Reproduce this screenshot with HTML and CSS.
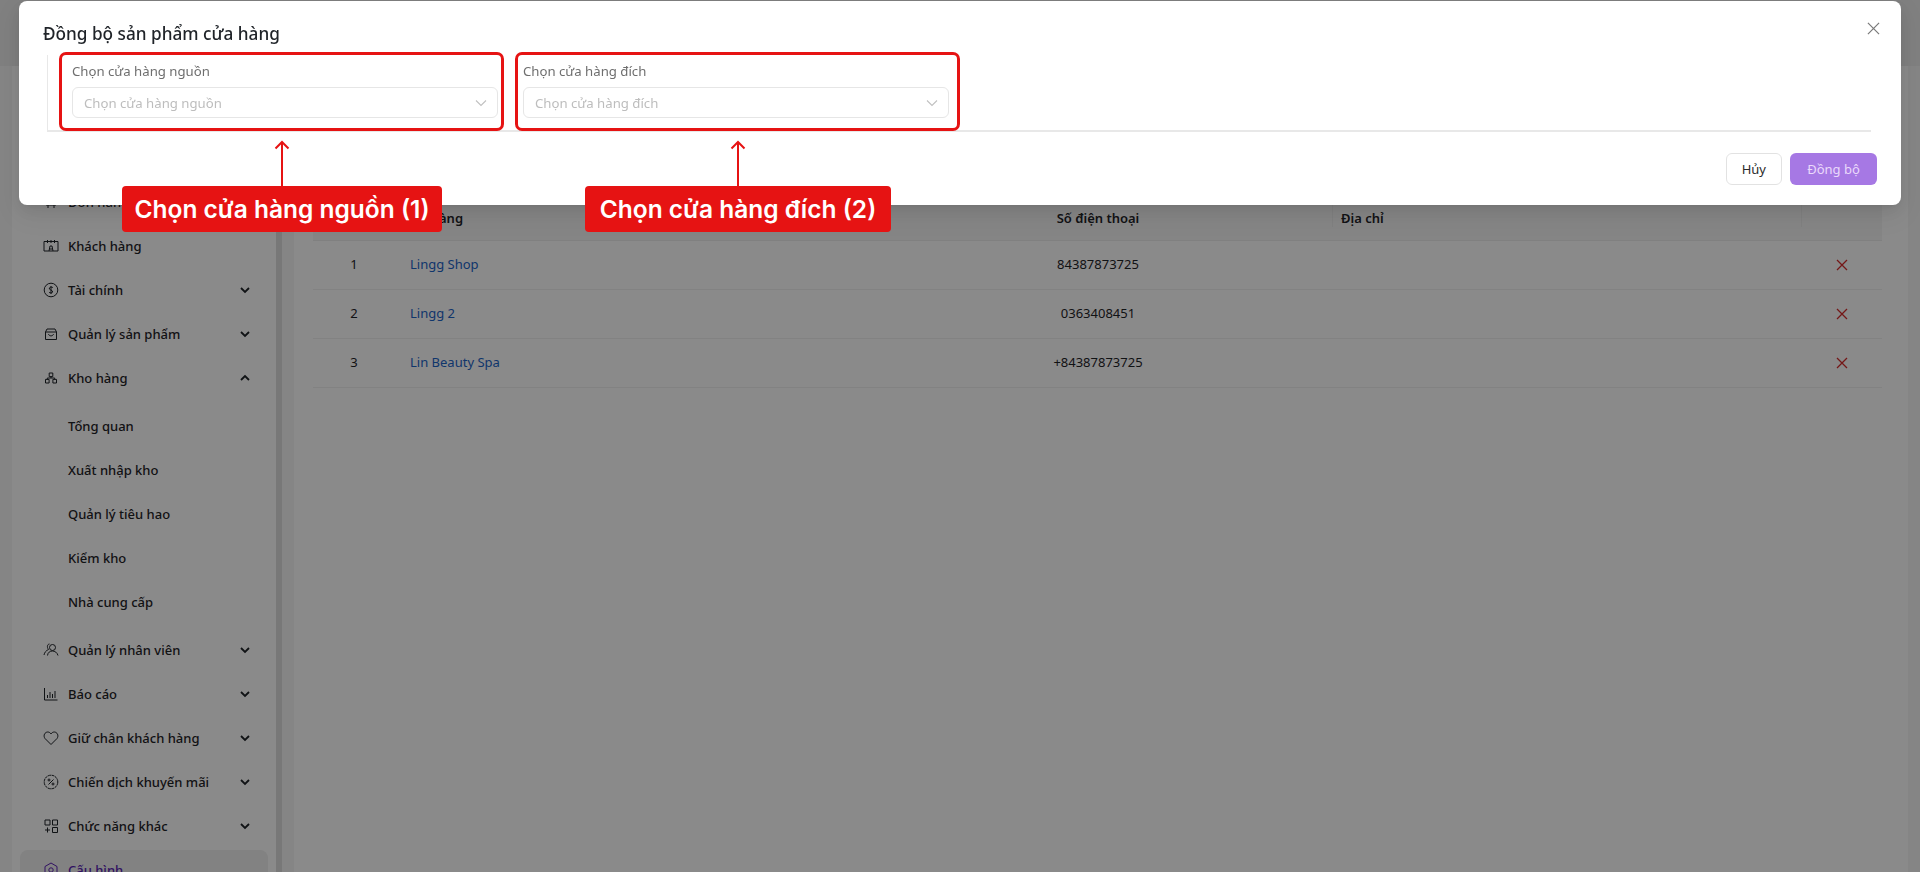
FILE: index.html
```html
<!DOCTYPE html>
<html lang="vi">
<head>
    <meta charset="UTF-8">
    <title>Đồng bộ sản phẩm cửa hàng</title>
    <link rel="stylesheet" href="styles.css">
</head>
<body>
    <div class="page">
        <header class="topbar"></header>
        <div class="layout">
            <aside class="sidebar">
                <nav class="menu">
                    <a class="menu-item"><span class="menu-icon"></span><span class="menu-label">Tổng quan</span></a>
                    <a class="menu-item"><span class="menu-icon"></span><span class="menu-label">Lịch hẹn</span></a>
                    <a class="menu-item">
                        <svg class="menu-icon" viewBox="0 0 16 16"><path d="M3 3h10l-1 5H4zM5 11v3M11 11v3M3 11h10"/></svg>
                        <span class="menu-label">Đơn hàng</span>
                    </a>
                    <a class="menu-item">
                        <svg class="menu-icon" viewBox="0 0 16 16"><path d="M1 3.500h14v9.500H1zM4.500 2v3M8 2v3M11.500 2v3M6 13l1-5h2l1 5M6.500 11h3"/></svg>
                        <span class="menu-label">Khách hàng</span>
                    </a>
                    <a class="menu-item">
                        <svg class="menu-icon" viewBox="0 0 16 16"><circle cx="8" cy="8" r="6.800"/><path d="M10 5.800C9.500 5 7 4.700 6.300 6c-.8 2 3.700 2 3.400 4-.4 1.300-3 1.100-3.700.2M8 4v8"/></svg>
                        <span class="menu-label">Tài chính</span>
                        <svg class="menu-caret" viewBox="0 0 12 12"><path d="M2 4l4 4 4-4"/></svg>
                    </a>
                    <a class="menu-item">
                        <svg class="menu-icon" viewBox="0 0 16 16"><path d="M4 3h8l1.500 3v7.500h-11V6zM2.500 6h11M5.500 8c.5 2.500 4.500 2.500 5 0"/></svg>
                        <span class="menu-label">Quản lý sản phẩm</span>
                        <svg class="menu-caret" viewBox="0 0 12 12"><path d="M2 4l4 4 4-4"/></svg>
                    </a>
                    <a class="menu-item">
                        <svg class="menu-icon" viewBox="0 0 16 16"><path d="M6.200 3h3.600v3.600H6.200zM2.500 9.400h3.600V13H2.500zM9.900 9.400h3.600V13H9.900zM8 6.600v1.400M4.300 9.400V8h7.400v1.400"/></svg>
                        <span class="menu-label">Kho hàng</span>
                        <svg class="menu-caret" viewBox="0 0 12 12"><path d="M2 8l4-4 4 4"/></svg>
                    </a>
                    <div class="submenu">
                        <a class="menu-item sub">Tổng quan</a>
                        <a class="menu-item sub">Xuất nhập kho</a>
                        <a class="menu-item sub">Quản lý tiêu hao</a>
                        <a class="menu-item sub">Kiểm kho</a>
                        <a class="menu-item sub">Nhà cung cấp</a>
                    </div>
                    <a class="menu-item">
                        <svg class="menu-icon" viewBox="0 0 16 16"><circle cx="9.500" cy="5.500" r="3"/><path d="M4.500 13.500c.5-6 9-6 10.500 0M6.500 2C4.500 2 3.500 5 5.500 7.500 3 8.500 1.500 10.500 1 13"/></svg>
                        <span class="menu-label">Quản lý nhân viên</span>
                        <svg class="menu-caret" viewBox="0 0 12 12"><path d="M2 4l4 4 4-4"/></svg>
                    </a>
                    <a class="menu-item">
                        <svg class="menu-icon" viewBox="0 0 16 16"><path d="M1.500 2v12h13M4.500 12V9M7 12V6M9.500 12V8M12 12V5"/></svg>
                        <span class="menu-label">Báo cáo</span>
                        <svg class="menu-caret" viewBox="0 0 12 12"><path d="M2 4l4 4 4-4"/></svg>
                    </a>
                    <a class="menu-item">
                        <svg class="menu-icon" viewBox="0 0 16 16"><path d="M8 14.500L2 8.500C-.2 5.500 2 2 4.700 2 6.200 2 7.300 2.800 8 4 8.700 2.800 9.800 2 11.300 2 14 2 16.200 5.500 14 8.500z"/></svg>
                        <span class="menu-label">Giữ chân khách hàng</span>
                        <svg class="menu-caret" viewBox="0 0 12 12"><path d="M2 4l4 4 4-4"/></svg>
                    </a>
                    <a class="menu-item">
                        <svg class="menu-icon" viewBox="0 0 16 16"><circle cx="8" cy="8" r="6.800" stroke-dasharray="3 .6"/><path d="M5.500 10.500l5-5"/><circle cx="6" cy="6" r="1"/><circle cx="10" cy="10" r="1"/></svg>
                        <span class="menu-label">Chiến dịch khuyến mãi</span>
                        <svg class="menu-caret" viewBox="0 0 12 12"><path d="M2 4l4 4 4-4"/></svg>
                    </a>
                    <a class="menu-item">
                        <svg class="menu-icon" viewBox="0 0 16 16"><path d="M2 2h5v5H2zM9.500 2h5v5h-5zM9.500 9.500h5v5h-5zM4.500 9.500v5M2 12h5"/></svg>
                        <span class="menu-label">Chức năng khác</span>
                        <svg class="menu-caret" viewBox="0 0 12 12"><path d="M2 4l4 4 4-4"/></svg>
                    </a>
                    <a class="menu-item active">
                        <svg class="menu-icon" viewBox="0 0 16 16"><path d="M8 1l6 3.500v7L8 15l-6-3.500v-7z"/><circle cx="8" cy="8" r="2.200"/></svg>
                        <span class="menu-label">Cấu hình</span>
                    </a>
                </nav>
            </aside>
            <div class="gutter"></div>
            <main class="content">
                <div class="content-head"></div>
                <table class="store-table">
                    <thead>
                        <tr>
                            <th class="col-no">STT</th>
                            <th class="col-name">Tên cửa hàng</th>
                            <th class="col-phone">Số điện thoại</th>
                            <th class="col-address">Địa chỉ</th>
                            <th class="col-action"></th>
                        </tr>
                    </thead>
                    <tbody>
                        <tr>
                            <td class="col-no">1</td>
                            <td class="col-name"><a>Lingg Shop</a></td>
                            <td class="col-phone">84387873725</td>
                            <td></td>
                            <td class="col-action"><svg class="remove" viewBox="0 0 12 12"><path d="M1 1l10 10M11 1L1 11"/></svg></td>
                        </tr>
                        <tr>
                            <td class="col-no">2</td>
                            <td class="col-name"><a>Lingg 2</a></td>
                            <td class="col-phone">0363408451</td>
                            <td></td>
                            <td class="col-action"><svg class="remove" viewBox="0 0 12 12"><path d="M1 1l10 10M11 1L1 11"/></svg></td>
                        </tr>
                        <tr>
                            <td class="col-no">3</td>
                            <td class="col-name"><a>Lin Beauty Spa</a></td>
                            <td class="col-phone">+84387873725</td>
                            <td></td>
                            <td class="col-action"><svg class="remove" viewBox="0 0 12 12"><path d="M1 1l10 10M11 1L1 11"/></svg></td>
                        </tr>
                    </tbody>
                </table>
            </main>
        </div>
    </div>

    <div class="mask"></div>

    <section class="modal">
        <h2 class="modal-title">Đồng bộ sản phẩm cửa hàng</h2>
        <svg class="modal-close" viewBox="0 0 14 14"><path d="M1 1l12 12M13 1L1 13"/></svg>
        <div class="sync-form">
            <div class="field">
                <label class="field-label">Chọn cửa hàng nguồn</label>
                <div class="select">
                    <span>Chọn cửa hàng nguồn</span>
                    <svg class="select-arrow" viewBox="0 0 12 12"><path d="M1 3.500l5 5 5-5"/></svg>
                </div>
            </div>
            <div class="field">
                <label class="field-label">Chọn cửa hàng đích</label>
                <div class="select">
                    <span>Chọn cửa hàng đích</span>
                    <svg class="select-arrow" viewBox="0 0 12 12"><path d="M1 3.500l5 5 5-5"/></svg>
                </div>
            </div>
        </div>
        <div class="modal-footer">
            <button class="btn">Hủy</button>
            <button class="btn btn-primary">Đồng bộ</button>
        </div>
    </section>

    <div class="note-box note-box-source"></div>
    <div class="note-box note-box-target"></div>

    <div class="note note-source">
        <svg class="note-arrow" viewBox="0 0 16 46"><path d="M8 46V2M1.500 8.500L8 2l6.500 6.500"/></svg>
        <div class="note-text">Chọn cửa hàng nguồn (1)</div>
    </div>
    <div class="note note-target">
        <svg class="note-arrow" viewBox="0 0 16 46"><path d="M8 46V2M1.500 8.500L8 2l6.500 6.500"/></svg>
        <div class="note-text">Chọn cửa hàng đích (2)</div>
    </div>
</body>
</html>
```

FILE: styles.css
```css
* {
    box-sizing: border-box;
}
html, body {
    margin: 0;
    height: 100%;
    overflow: hidden;
}
body {
    font-family: "Noto Sans", "Open Sans", sans-serif;
    font-size: 13px;
    color: #1f2328;
    background-color: #f5f5f5;
}
.page {
    height: 872px;
    display: flex;
    flex-direction: column;
}
.topbar {
    height: 66px;
    background-color: #ececec;
    flex-shrink: 0;
}
.layout {
    display: flex;
    flex: 1;
    min-height: 0;
    padding-left: 12px;
}

/* sidebar */
.sidebar {
    width: 264px;
    background-color: #ffffff;
    padding-top: 26px;
    flex-shrink: 0;
}
.menu {
    display: flex;
    flex-direction: column;
}
.submenu {
    display: flex;
    flex-direction: column;
    padding: 4px 0;
}
.menu-item {
    display: flex;
    align-items: center;
    height: 40px;
    margin: 2px 8px;
    padding: 0 17px 0 23px;
    border-radius: 8px;
    font-weight: 500;
    white-space: nowrap;
}
.menu-item.sub {
    padding-left: 48px;
}
.menu-item.active {
    background-color: #f0f0f0;
    color: #5b1fb5;
}
.menu-icon {
    width: 16px;
    height: 16px;
    margin-right: 9px;
    flex-shrink: 0;
    fill: none;
    stroke: currentColor;
    stroke-width: 1;
}
.menu-label {
    flex: 1;
}
.menu-caret {
    width: 12px;
    height: 12px;
    fill: none;
    stroke: currentColor;
    stroke-width: 1.800;
}
.gutter {
    width: 6px;
    background-color: #dedede;
    flex-shrink: 0;
}

/* store table */
.content {
    flex: 1;
    margin-left: 12px;
    margin-right: 12px;
    background-color: #ffffff;
    padding: 0 26px 0 19px;
}
.content-head {
    height: 139px;
}
.store-table {
    width: 1569px;
    border-collapse: collapse;
    table-layout: fixed;
}
.store-table th {
    height: 35px;
    padding: 0 8px 8px;
    background-color: #f6f6f6;
    font-weight: 600;
    text-align: left;
    border-bottom: 1px solid #ececec;
}
.store-table th.col-phone,
.store-table th.col-address {
    background-image: linear-gradient(#ececec, #ececec);
    background-size: 1px 22px;
    background-position: right top;
    background-repeat: no-repeat;
}
.store-table td {
    height: 49px;
    padding: 0 8px 2px;
    border-bottom: 1px solid #f0f0f0;
}
.col-no {
    width: 80px;
}
.store-table .col-no {
    text-align: center;
    padding-left: 10px;
}
.col-name {
    width: 470px;
}
.store-table .col-name {
    padding-left: 17px;
}
.store-table th.col-name {
    padding-left: 0;
    text-indent: -15px;
}
.col-name a {
    color: #1c64c8;
}
.col-phone {
    width: 470px;
}
.store-table .col-phone {
    text-align: center;
}
.col-address {
    width: 469px;
}
.col-action {
    width: 80px;
}
.store-table .col-action {
    text-align: center;
}
.remove {
    width: 12px;
    height: 12px;
    fill: none;
    stroke: #d62c2c;
    stroke-width: 1.300;
    vertical-align: middle;
}

/* modal layer */
.mask {
    position: fixed;
    inset: 0;
    background-color: rgba(0, 0, 0, 0.46);
}
.modal {
    position: fixed;
    top: 1px;
    left: 19px;
    width: 1882px;
    height: 204px;
    background-color: #ffffff;
    border-radius: 8px;
    padding: 21px 24px 0 24px;
    box-shadow: 0 6px 16px rgba(0, 0, 0, 0.08), 0 3px 6px -4px rgba(0, 0, 0, 0.12), 0 9px 28px 8px rgba(0, 0, 0, 0.05);
}
.modal-title {
    margin: 0;
    font-size: 17.200px;
    line-height: 24px;
    font-weight: 500;
    color: #1f2328;
}
.modal-close {
    position: absolute;
    top: 21px;
    right: 21px;
    width: 13px;
    height: 13px;
    fill: none;
    stroke: #7a7a7a;
    stroke-width: 1.300;
}
.sync-form {
    display: flex;
    gap: 25px;
    height: 77px;
    margin: 9px 6px 0 4px;
    padding: 6px 0 0 24px;
    border-left: 1px solid #e8e8e8;
    border-bottom: 2px solid #e8e8e8;
}
.field {
    width: 426px;
}
.field-label {
    display: block;
    height: 26px;
    line-height: 20px;
    font-size: 13.200px;
    color: #6e6e6e;
}
.select {
    display: flex;
    align-items: center;
    justify-content: space-between;
    height: 31px;
    padding: 0 10px 0 11px;
    border: 1.500px solid #e6e6e6;
    border-radius: 6px;
    font-size: 13.200px;
    color: #bdbdbd;
}
.select-arrow {
    width: 12px;
    height: 12px;
    fill: none;
    stroke: #c0c0c0;
    stroke-width: 1.100;
}
.modal-footer {
    display: flex;
    justify-content: flex-end;
    gap: 8px;
    margin-top: 21px;
}
.btn {
    height: 32px;
    padding: 0 15px;
    font-family: inherit;
    font-size: 13px;
    border-radius: 6px;
    border: 1.500px solid #e2e2e2;
    background-color: #ffffff;
    color: #2b2b2b;
}
.btn-primary {
    border: none;
    width: 87px;
    background-color: #a678e4;
    color: #ead9fb;
}

/* red notes drawn over the screenshot */
.note-box {
    position: fixed;
    top: 52px;
    height: 79px;
    border: 3px solid #e61313;
    border-radius: 7px;
}
.note-box-source {
    left: 59px;
    width: 445px;
}
.note-box-target {
    left: 515px;
    width: 445px;
}
.note {
    position: fixed;
    top: 140px;
    display: flex;
    flex-direction: column;
    align-items: center;
}
.note-source {
    left: 122px;
    width: 320px;
}
.note-target {
    left: 585px;
    width: 306px;
}
.note-arrow {
    width: 16px;
    height: 46px;
    fill: none;
    stroke: #e61313;
    stroke-width: 2;
    display: block;
}
.note-text {
    width: 100%;
    height: 46px;
    line-height: 46px;
    text-align: center;
    white-space: nowrap;
    background-color: #e61313;
    border-radius: 4px;
    font-family: "Inter", sans-serif;
    font-size: 24.500px;
    font-weight: 600;
    color: #ffffff;
}
```
